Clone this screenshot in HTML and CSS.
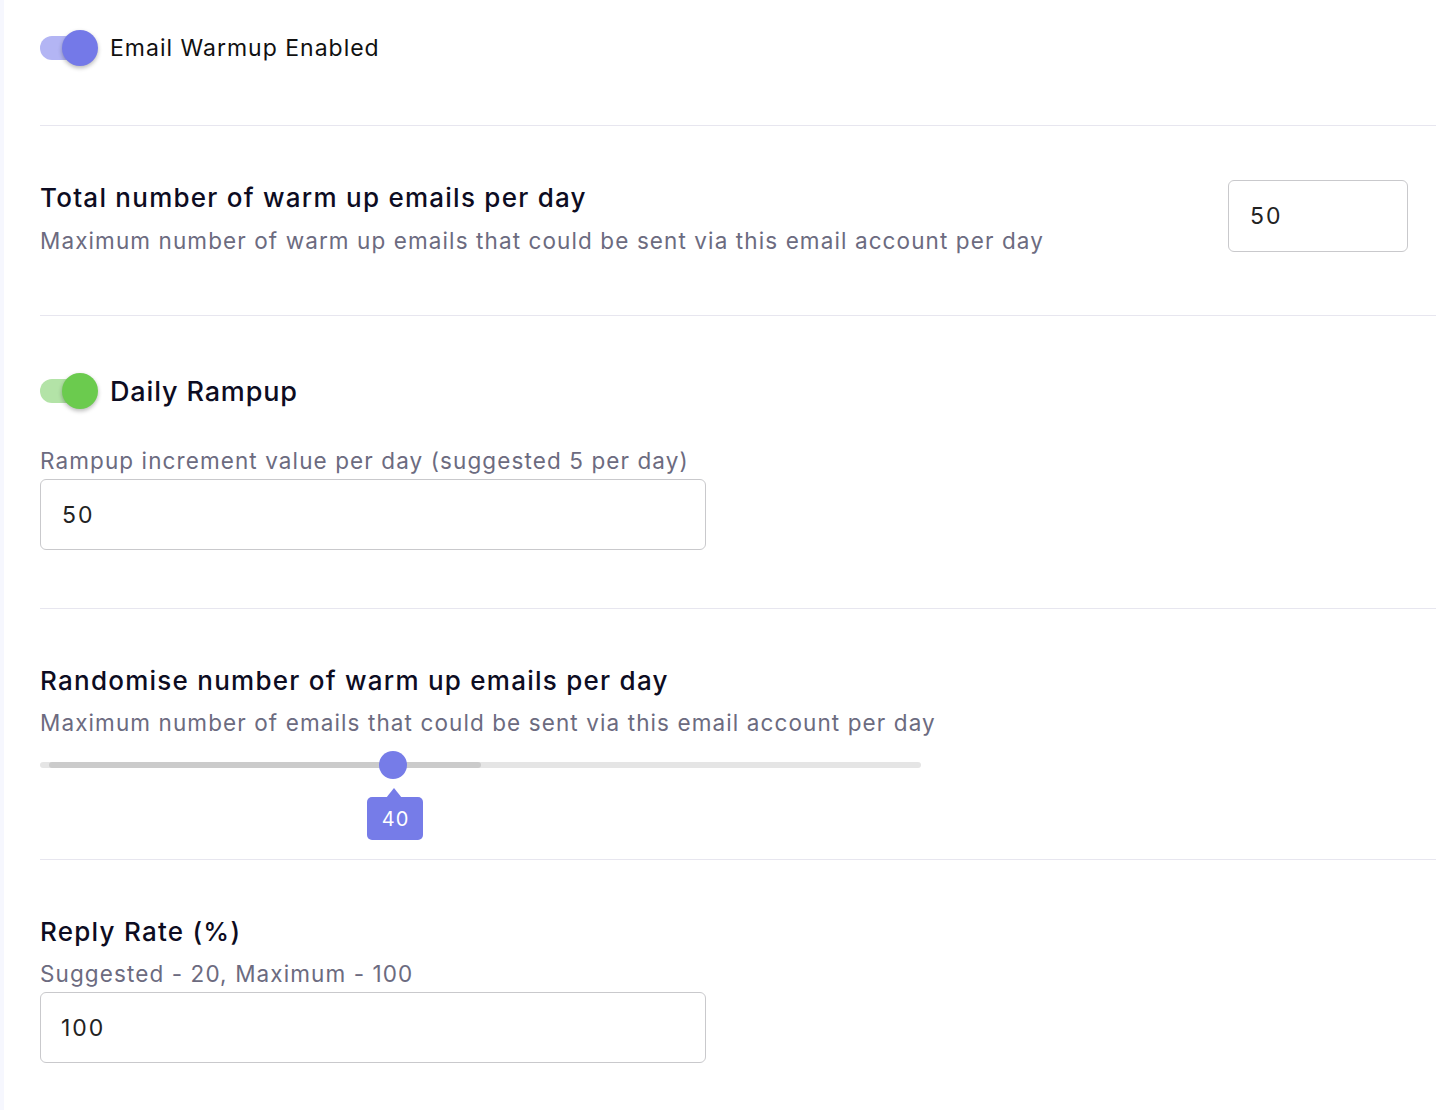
FILE: index.html
```html
<!DOCTYPE html>
<html>
<head>
<meta charset="utf-8">
<link rel="stylesheet" href="styles.css">
</head>
<body>
<div class="page">
  <div class="strip"></div>
  <main class="content">
    <section class="sec sec-warmup">
      <div class="toggle-row">
        <span class="toggle toggle-blue"><span class="knob"></span></span>
        <span class="toggle-label">Email Warmup Enabled</span>
      </div>
    </section>

    <section class="sec sec-total">
      <div class="text-block">
        <div class="title">Total number of warm up emails per day</div>
        <div class="desc desc-gap">Maximum number of warm up emails that could be sent via this email account per day</div>
      </div>
      <div class="input input-small">50</div>
    </section>

    <section class="sec sec-rampup">
      <div class="toggle-row">
        <span class="toggle toggle-green"><span class="knob"></span></span>
        <span class="toggle-label toggle-label-lg">Daily Rampup</span>
      </div>
      <div class="desc field-label">Rampup increment value per day (suggested 5 per day)</div>
      <div class="input input-wide">50</div>
    </section>

    <section class="sec sec-random">
      <div class="title">Randomise number of warm up emails per day</div>
      <div class="desc desc-gap2">Maximum number of emails that could be sent via this email account per day</div>
      <div class="slider">
        <div class="rail">
          <div class="fill" style="left:9px;width:432px"></div>
        </div>
        <div class="thumb" style="left:339px"></div>
        <div class="tip" style="left:327px">40</div>
      </div>
    </section>

    <section class="sec sec-reply">
      <div class="title">Reply Rate (%)</div>
      <div class="desc desc-gap2">Suggested - 20, Maximum - 100</div>
      <div class="input input-wide input-reply">100</div>
    </section>
  </main>
</div>
</body>
</html>
```

FILE: styles.css
```css
* { box-sizing: border-box; }
html, body { margin: 0; padding: 0; background: #fff; }
body {
  font-family: Inter, "Noto Sans", sans-serif;
  color: #0d0c22;
}
.page { display: flex; min-height: 1110px; }
.strip { width: 4px; background: #f6f7fe; flex: none; }
.content { flex: 1; padding-left: 36px; }

.sec { border-bottom: 1px solid #e7e6ef; }
.sec-warmup { padding: 30px 0 59px; }
.sec-total {
  display: flex;
  justify-content: space-between;
  align-items: flex-start;
  padding: 54px 28px 59px 0;
}
.sec-total .text-block { margin-top: 1px; }
.sec-rampup { padding: 57px 0 58px; }
.sec-random { padding: 55px 0 79px; }
.sec-reply { padding: 55px 0 48px; border-bottom: none; }

.toggle-row { display: flex; align-items: center; height: 36px; }
.toggle {
  position: relative;
  width: 58px;
  height: 36px;
  flex: none;
  display: flex;
  align-items: center;
}
.toggle::before {
  content: "";
  display: block;
  width: 56px;
  height: 24px;
  border-radius: 12px;
}
.toggle-blue::before { background: #b3b5f4; }
.toggle-green::before { background: #b3e3a7; }
.knob {
  position: absolute;
  left: 22px;
  top: 0;
  width: 36px;
  height: 36px;
  border-radius: 50%;
  box-shadow: 0 2px 4px rgba(0, 0, 0, 0.28);
}
.toggle-blue .knob { background: #7479e8; }
.toggle-green .knob { background: #6bcb4e; }
.toggle-label {
  margin-left: 12px;
  font-size: 23px;
  color: #111;
  letter-spacing: 1px;
}
.toggle-label-lg { font-size: 27px; font-weight: 500; color: #0d0c22; letter-spacing: 0.85px; }

.title {
  font-size: 26px;
  font-weight: 500;
  line-height: 34px;
  letter-spacing: 1.25px;
  color: #0d0c22;
}
.desc {
  font-size: 22.5px;
  line-height: 30px;
  letter-spacing: 1.1px;
  color: #6c6b80;
}
.desc-gap { margin-top: 11px; }
.desc-gap2 { margin-top: 10px; }
.field-label { margin-top: 37px; }

.input {
  border: 1px solid #c9c9cc;
  border-radius: 6px;
  font-size: 23px;
  letter-spacing: 2px;
  color: #222;
  display: flex;
  align-items: center;
  background: #fff;
}
.input-small { width: 180px; height: 72px; padding-left: 21px; flex: none; }
.input-wide { width: 666px; height: 71px; padding-left: 21px; margin-top: 3px; }
.input-reply { margin-top: 3px; padding-left: 20px; }

.slider {
  position: relative;
  width: 881px;
  height: 30px;
  margin-top: 12px;
  display: flex;
  align-items: center;
}
.rail {
  position: relative;
  width: 100%;
  height: 6px;
  border-radius: 3px;
  background: #e5e5e5;
}
.fill {
  position: absolute;
  top: 0;
  height: 6px;
  border-radius: 3px;
  background: #cbcbcb;
}
.thumb {
  position: absolute;
  top: 1px;
  width: 28px;
  height: 28px;
  border-radius: 50%;
  background: #767ce8;
}
.tip {
  position: absolute;
  top: 47px;
  width: 56px;
  height: 43px;
  border-radius: 5px;
  background: #767ce8;
  color: #fff;
  font-size: 20px;
  letter-spacing: 1px;
  padding-left: 1px;
  display: flex;
  align-items: center;
  justify-content: center;
}
.tip::before {
  content: "";
  position: absolute;
  top: -9px;
  left: 19px;
  border-left: 8px solid transparent;
  border-right: 8px solid transparent;
  border-bottom: 10px solid #767ce8;
}
```
